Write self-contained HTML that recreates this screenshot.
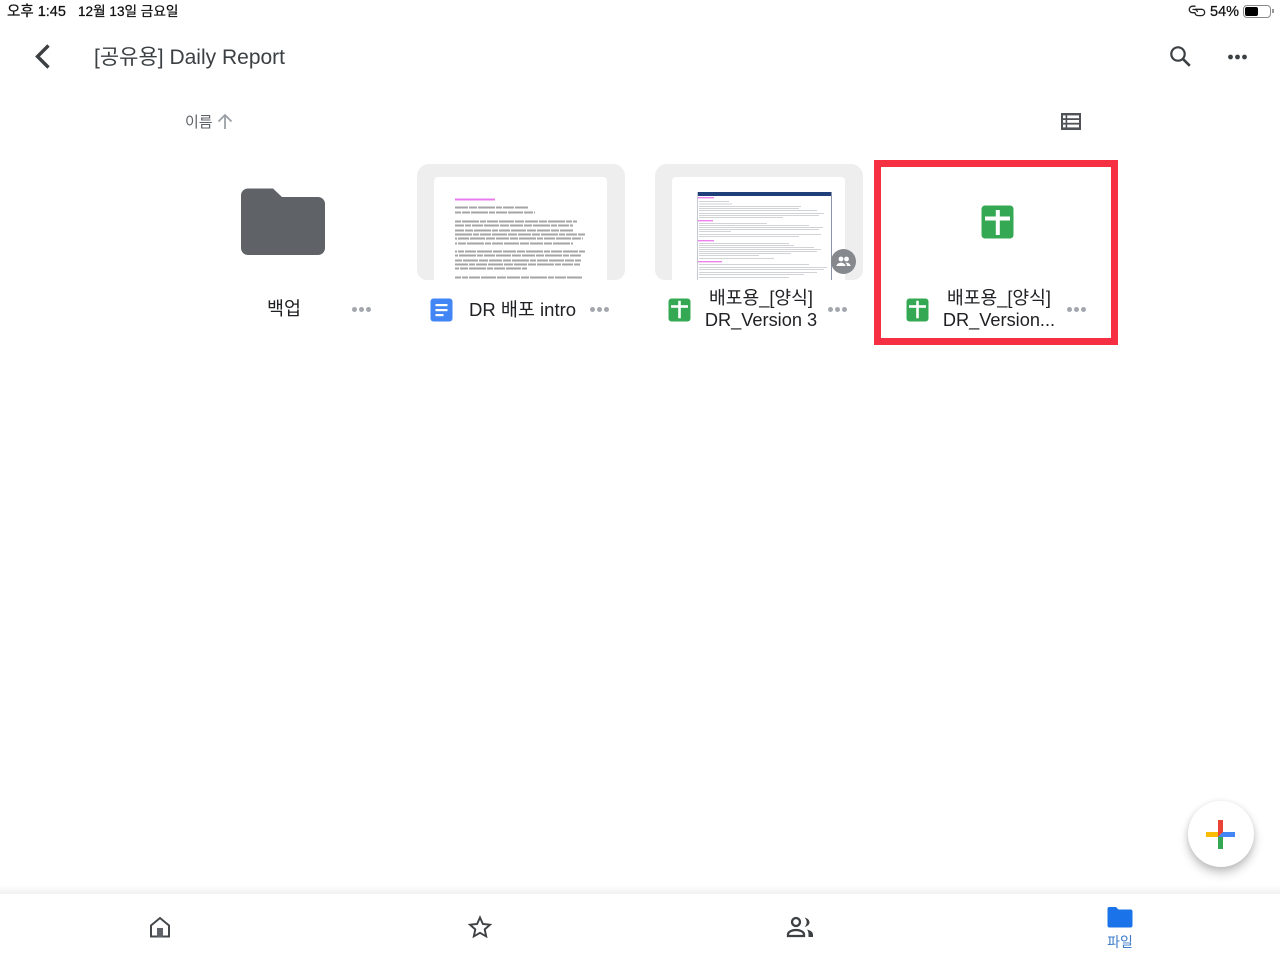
<!DOCTYPE html>
<html lang="ko">
<head>
<meta charset="utf-8">
<style>
html,body{margin:0;padding:0;background:#fff;}
body{width:1280px;height:960px;position:relative;overflow:hidden;font-family:"Liberation Sans","Noto Sans CJK KR",sans-serif;color:#202124;}
.t{position:absolute;white-space:nowrap;line-height:1;}
.c{text-align:center;}
svg{position:absolute;display:block;}
.card{position:absolute;top:164px;width:208px;height:116px;background:#eeeeee;border-radius:12px 12px 10px 10px;overflow:hidden;}
.inner{position:absolute;left:17px;top:13px;width:173px;height:103px;background:#fff;border-radius:4px 4px 0 0;}
.dots{position:absolute;width:20px;height:6px;}
.dots i{position:absolute;top:0;width:5px;height:5px;border-radius:50%;background:#a3a7ad;}
.dots i:nth-child(1){left:0}.dots i:nth-child(2){left:7px}.dots i:nth-child(3){left:14px}
.name{font-size:18.2px;color:#202124;text-align:center;line-height:22px;position:absolute;white-space:nowrap;}
.st{-webkit-text-stroke:.25px #111;color:#111;}
</style>
</head>
<body>

<div class="t st" style="left:7px;top:5px;font-size:14.5px;">오후 1:45</div>
<div class="t st" style="left:78px;top:5px;font-size:13.6px;">12월 13일 금요일</div>

<svg style="left:1186px;top:3px" width="20" height="15" viewBox="0 0 20 15" fill="none" stroke="#222" stroke-width="1.3"><path d="M9.500 3.200H6.500a3.100 3.100 0 0 0 0 6.500h3"/><path d="M6.500 6.500h2a3 3 0 0 1 3 2.500"/><path d="M9 6.300h6.500a3.100 3.100 0 0 1 0 6.300h-3.500a3.100 3.100 0 0 1-3-2.600"/></svg>
<div class="t st" style="left:1210px;top:5px;font-size:14.5px;">54%</div>
<div style="position:absolute;left:1243px;top:5px;width:26px;height:11px;border:1px solid #8a8a8a;border-radius:4px;"></div>
<div style="position:absolute;left:1245px;top:7px;width:13px;height:9px;background:#000;border-radius:2px;"></div>
<div style="position:absolute;left:1272px;top:9px;width:1.500px;height:4px;background:#999;"></div>

<svg style="left:32px;top:42px" width="22" height="30" viewBox="0 0 22 30" fill="none"><path d="M16.500 3.500 5.500 14.500l11 11" stroke="#3c4043" stroke-width="3.400"/></svg>
<div class="t" style="left:94px;top:47px;font-size:21px;color:#3c4043;">[공유용] Daily Report</div>

<svg style="left:1168px;top:44px" width="24" height="24" viewBox="0 0 24 24" fill="none" stroke="#3c4043"><circle cx="10" cy="10" r="6.700" stroke-width="2.200"/><path d="M14.800 14.800l7 7" stroke-width="2.600"/></svg>
<svg style="left:1227px;top:53px" width="22" height="8" viewBox="0 0 22 8" fill="#3c4043"><circle cx="3.500" cy="4" r="2.400"/><circle cx="10.500" cy="4" r="2.400"/><circle cx="17.500" cy="4" r="2.400"/></svg>

<div class="t" style="left:185px;top:115px;font-size:15px;color:#5f6368;">이름</div>
<svg style="left:216px;top:113px" width="18" height="17" viewBox="0 0 18 17" fill="none" stroke="#9aa0a6" stroke-width="1.800"><path d="M9 16V2.500M2.500 8.500 9 2l6.500 6.500"/></svg>

<svg style="left:1060px;top:112px" width="22" height="19" viewBox="0 0 22 19"><path fill="#4f5357" d="M1 1h20v17H1z"/><g fill="#fff"><rect x="3" y="3.400" width="2.600" height="2.800"/><rect x="7.200" y="3.400" width="11.800" height="2.800"/><rect x="3" y="8" width="2.600" height="2.800"/><rect x="7.200" y="8" width="11.800" height="2.800"/><rect x="3" y="12.600" width="2.600" height="2.800"/><rect x="7.200" y="12.600" width="11.800" height="2.800"/></g></svg>

<svg style="left:240px;top:187px" width="86" height="70" viewBox="0 0 86 70"><path fill="#5f6368" d="M8 1.500H33L42 10H78a7 7 0 0 1 7 7V61a7 7 0 0 1-7 7H8a7 7 0 0 1-7-7V8.500a7 7 0 0 1 7-7z"/></svg>
<div class="t c" style="left:244px;width:80px;top:300px;font-size:18.500px;">백업</div>
<div class="dots" style="left:352px;top:307px"><i></i><i></i><i></i></div>

<div class="card" style="left:417px"><div class="inner"></div></div>
<svg style="left:434px;top:190px" width="173" height="90" viewBox="0 0 173 90">
<line x1="21" y1="9.500" x2="61" y2="9.500" stroke="#e45ce8" stroke-width="2" opacity=".8"/>
<g stroke="#3a3a3a" stroke-width="2" opacity=".45" stroke-dasharray="13 1 8 1 17 1 6 1 11 1 15 1 9 1" fill="none">
<path stroke-dashoffset="0" d="M21 17.500h73"/><path stroke-dashoffset="7" d="M21 22.500h80"/>
<path stroke-dashoffset="16" d="M21 31.500h122"/><path stroke-dashoffset="31" d="M21 35.500h118"/><path stroke-dashoffset="4" d="M21 40.500h118"/><path stroke-dashoffset="23" d="M21 44.500h130"/><path stroke-dashoffset="45" d="M21 48.500h128"/><path stroke-dashoffset="11" d="M21 53.500h118"/>
<path stroke-dashoffset="38" d="M21 61.500h130"/><path stroke-dashoffset="19" d="M21 65.500h127"/><path stroke-dashoffset="52" d="M21 70.500h126"/><path stroke-dashoffset="27" d="M21 74.500h125"/><path stroke-dashoffset="9" d="M21 78.500h72"/><path stroke-dashoffset="34" d="M21 87.500h127"/>
</g>
</svg>
<svg style="left:430px;top:298px" width="23" height="24" viewBox="0 0 23 24"><rect x="0.500" y="0.500" width="22" height="23" rx="3" fill="#4285f4"/><g fill="#fff"><rect x="5.500" y="6" width="12" height="2.200"/><rect x="5.500" y="11" width="12" height="2.200"/><rect x="5.500" y="16" width="8" height="2.200"/></g></svg>
<div class="t" style="left:469px;top:301px;font-size:18.500px;">DR 배포 intro</div>
<div class="dots" style="left:590px;top:307px"><i></i><i></i><i></i></div>

<div class="card" style="left:655px"><div class="inner"></div></div>
<svg style="left:697px;top:191px" width="135" height="89" viewBox="0 0 135 89">
<rect x="0" y="1" width="134" height="4" fill="#1f3f7a"/>
<rect x="134" y="1" width="1" height="88" fill="#8a94a8"/>
<rect x="0" y="1" width="1" height="88" fill="#c4c8d2"/>
<g fill="#e75be7" opacity=".75"><rect x="1" y="6" width="16" height="1.400"/><rect x="1" y="29" width="15" height="1.400"/><rect x="1" y="49" width="16" height="1.400"/><rect x="1" y="70" width="24" height="1.400"/></g>
<g fill="#9a9fa8" opacity=".45">
<rect x="2" y="10" width="30" height="1"/><rect x="2" y="12.500" width="33" height="1"/>
<rect x="2" y="15" width="102" height="1"/><rect x="2" y="17" width="100" height="1"/><rect x="2" y="19" width="118" height="1"/><rect x="2" y="22" width="125" height="1"/><rect x="2" y="24" width="120" height="1"/><rect x="2" y="26" width="84" height="1"/>
<rect x="2" y="32" width="68" height="1"/><rect x="2" y="34" width="110" height="1"/><rect x="2" y="36" width="124" height="1"/><rect x="2" y="38" width="120" height="1"/><rect x="2" y="40" width="32" height="1"/><rect x="2" y="43" width="122" height="1"/><rect x="2" y="45" width="100" height="1"/>
<rect x="2" y="52" width="90" height="1"/><rect x="2" y="54" width="95" height="1"/><rect x="2" y="56" width="115" height="1"/><rect x="2" y="58" width="122" height="1"/><rect x="2" y="60" width="118" height="1"/><rect x="2" y="62" width="92" height="1"/><rect x="2" y="64" width="60" height="1"/><rect x="2" y="67" width="75" height="1"/>
<rect x="2" y="73" width="110" height="1"/><rect x="2" y="76" width="128" height="1"/><rect x="2" y="78" width="125" height="1"/><rect x="2" y="81" width="118" height="1"/><rect x="2" y="83" width="105" height="1"/><rect x="2" y="86" width="90" height="1"/>
</g>
</svg>
<div style="position:absolute;left:831px;top:249px;width:25px;height:25px;border-radius:50%;background:#85888c;"></div>
<svg style="left:835px;top:253px" width="17" height="17" viewBox="0 0 17 17" fill="#fff"><circle cx="6" cy="6" r="2.400"/><circle cx="11.500" cy="6" r="2.400"/><path d="M1.500 13c0-2.200 2.500-3.300 4.500-3.300s4.500 1.100 4.500 3.300z"/><path d="M11.500 9.700c2 0 4 1.100 4 3.300h-3.600c0-1.300-.5-2.400-1.500-3.200z"/></svg>

<svg style="left:668px;top:298px" width="23" height="24" viewBox="0 0 23 24"><rect x="0.500" y="0.500" width="22" height="23" rx="3" fill="#34a853"/><g fill="#fff"><rect x="3" y="7.200" width="17" height="2.600"/><rect x="10.200" y="2.800" width="2.600" height="17.500"/></g></svg>
<div class="name" style="left:691px;width:140px;top:287px;">배포용_[양식]<br>DR_Version 3</div>
<div class="dots" style="left:828px;top:307px"><i></i><i></i><i></i></div>

<div style="position:absolute;left:874px;top:160px;width:244px;height:185px;box-sizing:border-box;border:7px solid #f62f42;background:#fff;"></div>
<svg style="left:981px;top:205px" width="33" height="34" viewBox="0 0 33 34"><rect x="0.500" y="0.500" width="32" height="33" rx="3.500" fill="#34a853"/><g fill="#fff"><rect x="4" y="11.500" width="25" height="4"/><rect x="14.800" y="5" width="4" height="25"/></g></svg>
<svg style="left:906px;top:298px" width="23" height="24" viewBox="0 0 23 24"><rect x="0.500" y="0.500" width="22" height="23" rx="3" fill="#34a853"/><g fill="#fff"><rect x="3" y="7.200" width="17" height="2.600"/><rect x="10.200" y="2.800" width="2.600" height="17.500"/></g></svg>
<div class="name" style="left:929px;width:140px;top:287px;">배포용_[양식]<br>DR_Version...</div>
<div class="dots" style="left:1067px;top:307px"><i></i><i></i><i></i></div>

<div style="position:absolute;left:1188px;top:801px;width:66px;height:66px;border-radius:50%;background:#fff;box-shadow:0 6px 10px rgba(0,0,0,.22),0 1px 6px rgba(0,0,0,.1);"></div>
<svg style="left:1205px;top:819px" width="31" height="31" viewBox="0 0 31 31"><rect x="1" y="13" width="13" height="5" fill="#fbbc05"/><rect x="16" y="13" width="14" height="5" fill="#4285f4"/><rect x="13" y="1" width="5" height="13" fill="#ea4335"/><rect x="13" y="16" width="5" height="14" fill="#34a853"/><path d="M13 13h5l-5 5z" fill="#ea4335"/><path d="M18 13v5h-5z" fill="#4285f4"/></svg>

<div style="position:absolute;left:0;top:885px;width:1280px;height:9px;background:linear-gradient(#ffffff,#f1f1f1);"></div>
<div style="position:absolute;left:0;top:894px;width:1280px;height:66px;background:#fff;"></div>

<svg style="left:149px;top:916px" width="22" height="23" viewBox="0 0 22 23" fill="none"><path d="M2 20.500V9.500L11 2l9 7.500v11z" stroke="#45494d" stroke-width="2"/><rect x="8" y="12" width="6" height="9" fill="#5f6368"/></svg>
<svg style="left:467px;top:914px" width="26" height="26" viewBox="0 0 26 26" fill="none"><path d="M13 3.500l2.900 6.500 7.100.7-5.300 4.700 1.500 7L13 18.800l-6.200 3.600 1.500-7L3 10.700l7.100-.7z" stroke="#3c4043" stroke-width="1.900" stroke-linejoin="miter"/></svg>
<svg style="left:786px;top:916px" width="28" height="22" viewBox="0 0 28 22" fill="none"><circle cx="10" cy="6" r="4" stroke="#3c4043" stroke-width="2.300"/><path d="M2 20v-1.500c0-3 4.500-4.500 8-4.500s8 1.500 8 4.500V20z" stroke="#3c4043" stroke-width="2.300"/><path d="M18.500 1.500c3 .8 5 2.500 5 4.800s-2 4-5 4.700c1.500-1.500 2.200-3 2.200-4.700s-.7-3.300-2.200-4.800z" fill="#3c4043"/><path d="M21 13.500c3 .7 6 2.300 6 5.200V21h-4.500v-2.500c0-2-.5-3.700-1.500-5z" fill="#3c4043"/></svg>

<svg style="left:1107px;top:906px" width="26" height="22" viewBox="0 0 26 22"><path fill="#1a73e8" d="M2.500 1h6.500l2.500 2.500h12a2 2 0 0 1 2 2v14a2 2 0 0 1-2 2h-21a2 2 0 0 1-2-2V3a2 2 0 0 1 2-2z"/></svg>
<div class="t c" style="left:1090px;width:60px;top:935px;font-size:14px;color:#3d7cc9;">파일</div>

</body>
</html>
